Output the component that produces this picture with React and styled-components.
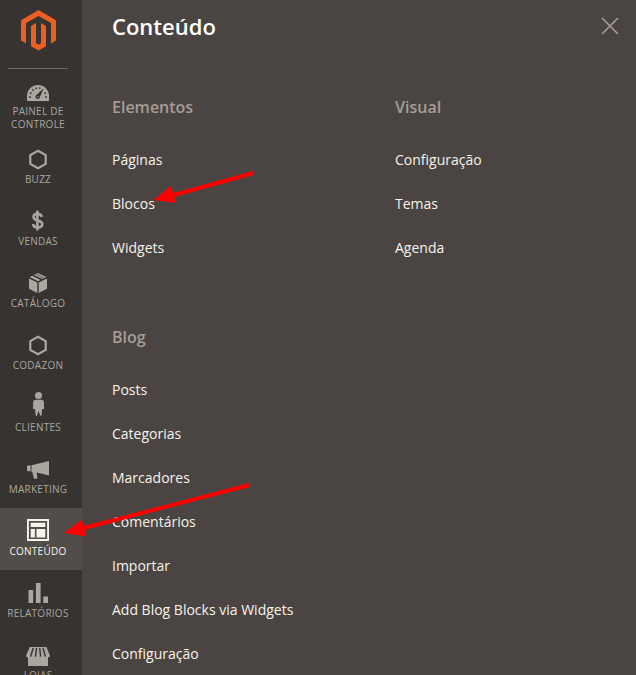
import React from "react";
import styled, { createGlobalStyle } from "styled-components";

const GlobalStyle = createGlobalStyle`
  * { box-sizing: border-box; }
  body { margin: 0; background: #4a4542; font-family: "Open Sans", "Noto Sans", sans-serif; overflow: hidden; }
`;

const Page = styled.div`
  position: relative;
  display: flex;
  width: 636px;
  height: 675px;
  overflow: hidden;
  background: #4a4542;
`;

const Sidebar = styled.nav`
  width: 82px;
  flex: none;
  background: #373330;
`;

const Brand = styled.div`
  width: 60px;
  height: 69px;
  margin: 0 6px 0 8px;
  padding: 10px 0 0 13px;
  border-bottom: 1px solid #736963;
  svg { display: block; }
`;

const NavItem = styled.a`
  display: flex;
  flex-direction: column;
  align-items: center;
  height: ${(p) => (p.$tall ? 67 : 62)}px;
  padding: ${(p) => (p.$tall ? 2 : 3)}px 6px 0 0;
  background: ${(p) => (p.$active ? "#524d49" : "transparent")};
  color: ${(p) => (p.$active ? "#f7f3eb" : "#aaa6a0")};
`;

const NavIcon = styled.svg`
  display: block;
  flex: none;
  width: 40px;
  height: 34px;
  fill: currentColor;
`;

const NavLabel = styled.span`
  font-size: 10px;
  letter-spacing: 0.025em;
  line-height: 13px;
  text-align: center;
  text-transform: uppercase;
  white-space: pre-line;
`;

const Panel = styled.main`
  flex: 1;
  padding: 11px 12px 0 30px;
`;

const PanelHeader = styled.header`
  display: flex;
  justify-content: space-between;
  height: 83px;
`;

const Title = styled.h1`
  margin: 0;
  color: #fff;
  font-size: 22px;
  font-weight: 600;
  line-height: 30px;
`;

const CloseButton = styled.button`
  width: 28px;
  height: 28px;
  margin-top: 1px;
  padding: 5px;
  border: 0;
  background: none;
  svg { display: block; }
`;

const Columns = styled.div`
  display: grid;
  grid-template-columns: 283px 1fr;
`;

const Group = styled.section`
  height: ${(p) => (p.$short ? 230 : 350)}px;
`;

const GroupTitle = styled.h2`
  margin: 0 0 18px;
  color: #a79d95;
  font-size: 16px;
  font-weight: 600;
  line-height: 26px;
`;

const Link = styled.a`
  display: block;
  height: 44px;
  color: #f7f3eb;
  font-size: 14px;
  line-height: 44px;
`;

const Arrows = styled.svg`
  position: absolute;
  inset: 0;
  pointer-events: none;
`;

/* Every icon is drawn on a 40x34 canvas centred on x = 20. */
const icons = {
  dashboard: (
    <>
      <path d="M9 30V25a11 11 0 0 1 22 0v5z" />
      <g fill="#373330">
        <circle cx="12" cy="26" r="0.9" />
        <circle cx="12.8" cy="22.2" r="0.9" />
        <circle cx="15" cy="19" r="0.9" />
        <circle cx="18.2" cy="17.3" r="0.9" />
        <circle cx="21.8" cy="17.1" r="0.9" />
        <circle cx="27.2" cy="22.2" r="0.9" />
        <circle cx="28" cy="26" r="0.9" />
        <path d="M25.8 17.2L21.9 26a2.2 2.2 0 1 1-3.5-2z" />
      </g>
      <circle cx="19.9" cy="25.7" r="0.7" />
    </>
  ),
  hexagon: <path d="M20 11.7l7.7 4.4v8.8L20 29.3l-7.7-4.4v-8.8z" fill="none" stroke="currentColor" strokeWidth="2.2" />,
  dollar: (
    <path
      d="M23.9 15.8c-.6-2-2.1-2.900-4.300-2.900-2.500 0-4.100 1.200-4.100 3.100 0 4.800 8.800 2.200 8.800 7.100 0 2.200-1.800 3.400-4.600 3.400-2.700 0-4.300-1.200-4.800-3.500M19.400 9.500v20"
      fill="none"
      stroke="currentColor"
      strokeWidth="2.6"
    />
  ),
  box: (
    <>
      <path d="M11 15.4l8.3 4V30L11 25.8zM29 15.4l-8.3 4V30L29 25.8z" />
      <path d="M11.6 14.1l2.700-1.400 8.400 4.200-2.700 1.400zM15.800 12l3.900-2 8.700 4.100-3.800 1.900z" />
      <path d="M17.700 11l8.700 4.200" stroke="#373330" strokeWidth="0.6" />
    </>
  ),
  person: (
    <>
      <circle cx="20.5" cy="8.6" r="3.5" />
      <path d="M18 12.700h5c2 0 3 1.100 3 3v6.200h-1.800l-.7 6.800h-1.100L20.500 24l-1.600 4.700h-1.200L17 21.900h-1.900v-6.200c0-1.900 1-3 2.900-3z" />
    </>
  ),
  megaphone: (
    <path d="M9 17.800c0-1 .6-1.300 1.500-1.300h2.200v5.800h-2.200c-.9 0-1.500-.4-1.500-1.300zM13.500 16.200L31 12v14.500l-12.400-3 .9 6-3.500.3-1.700-6.900h-.8z" />
  ),
  content: (
    <path
      fillRule="evenodd"
      d="M9 8h22v22H9zM10.900 9.900v18.200h18.200V9.900zM12.700 11.800h14.600v4.300H12.700zM12.700 18h4.200v8.500h-4.200zM18.500 18h8.800v8.500h-8.800z"
    />
  ),
  bars: <path d="M10.500 17h4.700v13h-4.700zM17.900 10h4.700v20h-4.700zM25.300 23.500H30V30h-4.700z" />,
  store: (
    <>
      <path d="M11.800 12h16.700L32 20.800c0 2.200-4.300 2.200-4.600 0-.2 2.200-4.700 2.200-4.900 0-.3 2.200-4.700 2.200-5 0-.2 2.200-4.700 2.200-4.900 0-.3 2.200-4.600 2.200-4.600 0z" />
      <path d="M10 21.800h20V31H10z" />
      <path d="M15.200 13l-2.500 8.300M18.500 13l-1 8.300M21.700 13l.9 8.300M25 13l2.300 8.300" stroke="#373330" strokeWidth="1.400" />
    </>
  ),
};

const navigation = [
  { label: "Painel de\nControle", icon: "dashboard", tall: true },
  { label: "Buzz", icon: "hexagon" },
  { label: "Vendas", icon: "dollar" },
  { label: "Catálogo", icon: "box" },
  { label: "Codazon", icon: "hexagon" },
  { label: "Clientes", icon: "person" },
  { label: "Marketing", icon: "megaphone" },
  { label: "Conteúdo", icon: "content", active: true },
  { label: "Relatórios", icon: "bars" },
  { label: "Lojas", icon: "store" },
];

function MenuGroup({ title, items, short }) {
  return (
    <Group $short={short}>
      <GroupTitle>{title}</GroupTitle>
      {items.map((item) => (
        <Link key={item}>{item}</Link>
      ))}
    </Group>
  );
}

export default function App() {
  return (
    <>
      <GlobalStyle />
      <Page>
        <Sidebar>
          <Brand>
            <svg width="35" height="41" viewBox="0 0 35 41" fill="#eb5f23">
              <path d="M17.500 0L35 10.200v20.300l-5 2.900V13.100L17.500 5.900 5 13.100v20.300l-5-2.900V10.200z" />
              <path d="M15 13v20.300l2.500 1.500 2.500-1.500V13l5 2.900v20.300l-7.500 4.400-7.500-4.400V15.900z" />
            </svg>
          </Brand>
          {navigation.map(({ label, icon, active, tall }) => (
            <NavItem key={label} $active={active} $tall={tall}>
              <NavIcon viewBox="0 0 40 34">{icons[icon]}</NavIcon>
              <NavLabel>{label}</NavLabel>
            </NavItem>
          ))}
        </Sidebar>
        <Panel>
          <PanelHeader>
            <Title>Conteúdo</Title>
            <CloseButton aria-label="Fechar">
              <svg width="18" height="18" viewBox="0 0 18 18" stroke="#a79d95" strokeWidth="1.600">
                <path d="M1 1l16 16M17 1L1 17" />
              </svg>
            </CloseButton>
          </PanelHeader>
          <Columns>
            <MenuGroup short title="Elementos" items={["Páginas", "Blocos", "Widgets"]} />
            <MenuGroup short title="Visual" items={["Configuração", "Temas", "Agenda"]} />
            <MenuGroup
              title="Blog"
              items={["Posts", "Categorias", "Marcadores", "Comentários", "Importar", "Add Blog Blocks via Widgets", "Configuração"]}
            />
          </Columns>
        </Panel>
        <Arrows width="636" height="675" viewBox="0 0 636 675" fill="#f00" stroke="#f00">
          <path d="M253.500 173L172 195.500M249.500 485L84 528" strokeWidth="4" />
          <path d="M153.500 200L171 186l5 17zM64 533l18-13.500 4 17z" stroke="none" />
        </Arrows>
      </Page>
    </>
  );
}
